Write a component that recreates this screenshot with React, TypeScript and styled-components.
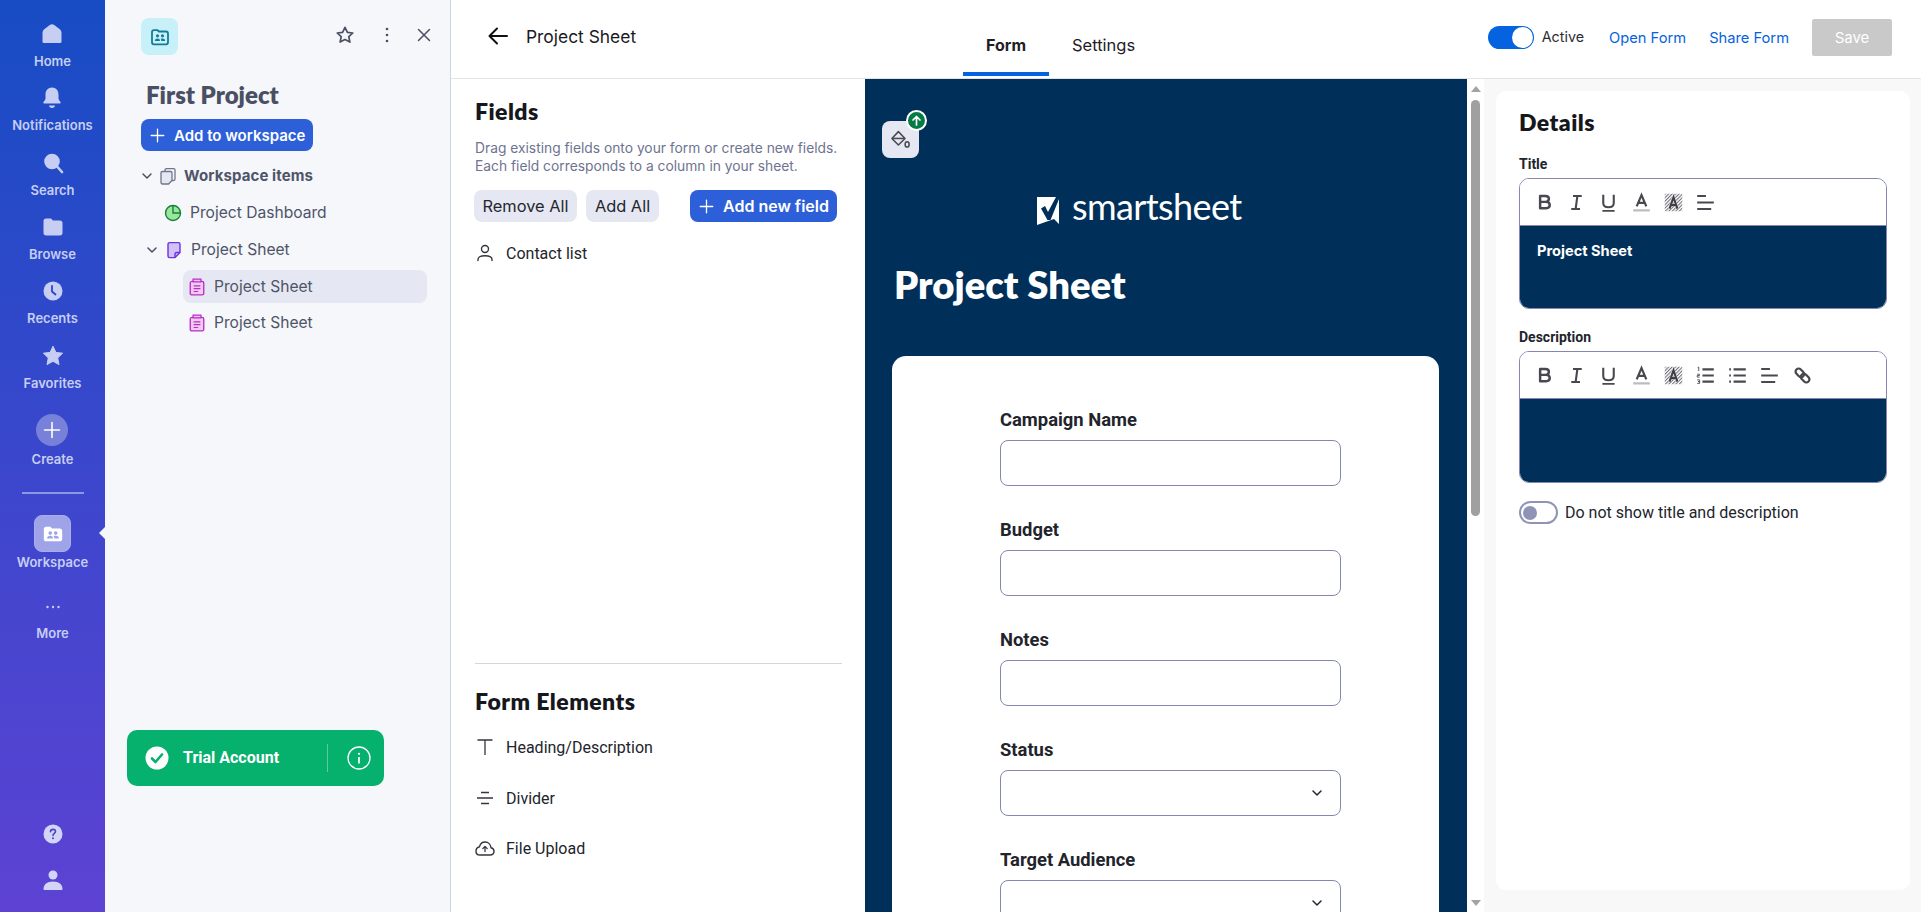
import * as React from "react";
import styled, { createGlobalStyle } from "styled-components";

const NAVY = "#003059";
const BLUE = "#2d5fd8";
const LINK = "#0563e0";
const FIELD_BORDER = "#8488b0";
const HEADING_FONT = `"Lato", "Liberation Sans", sans-serif`;
const BODY_FONT = `"Inter", "Liberation Sans", sans-serif`;
const LABEL_FONT = `"Roboto", "Liberation Sans", sans-serif`;

const GlobalStyle = createGlobalStyle`
  html, body { margin: 0; padding: 0; height: 100%; overflow: hidden; background: #fff; }
  #root { height: 100%; }
  * { box-sizing: border-box; }
`;

const Page = styled.div`
  display: flex;
  height: 912px;
  overflow: hidden;
  font-family: ${BODY_FONT};
`;

/* left rail */
const Rail = styled.nav`
  position: relative;
  flex: 0 0 105px;
  display: flex;
  flex-direction: column;
  align-items: center;
  padding-top: 22px;
  background: linear-gradient(180deg, #174cc4 0%, #5d42d4 100%);
  color: #c6cef3;
`;

const RailItem = styled.div<{ $top?: number }>`
  display: flex;
  flex-direction: column;
  align-items: center;
  margin-top: ${(p) => p.$top ?? 0}px;
`;

const RailIconBox = styled.div<{ $h?: number }>`
  display: flex;
  align-items: center;
  justify-content: center;
  height: ${(p) => p.$h ?? 24}px;
`;

const RailLabel = styled.span<{ $gap?: number }>`
  margin-top: ${(p) => p.$gap ?? 7}px;
  font-family: ${BODY_FONT};
  font-size: 13px;
  font-weight: 600;
  line-height: 16px;
  white-space: nowrap;
`;

const CreateCircle = styled.div`
  display: flex;
  align-items: center;
  justify-content: center;
  width: 32px;
  height: 32px;
  border-radius: 50%;
  background: #7781d9;
`;

const RailRule = styled.div`
  width: 62px;
  height: 2px;
  margin-top: 25px;
  background: #8d96e0;
`;

const WorkspaceTile = styled.div`
  display: flex;
  align-items: center;
  justify-content: center;
  width: 37px;
  height: 37px;
  border-radius: 8px;
  border: 1.5px solid #a9aeea;
  background: #9fa4e8;
`;

const RailNotch = styled.div`
  position: absolute;
  left: 99px;
  top: 527px;
  width: 6px;
  height: 12px;
  background: #f5f7fb;
  clip-path: polygon(100% 0, 0 50%, 100% 100%);
`;

const RailBottom = styled.div`
  margin-top: auto;
  padding-bottom: 20px;
  display: flex;
  flex-direction: column;
  align-items: center;
  gap: 22px;
`;

/* workspace panel */
const Panel = styled.aside`
  flex: 0 0 346px;
  display: flex;
  flex-direction: column;
  background: #f5f7fb;
  border-right: 1px solid #cfd5e6;
`;

const PanelTop = styled.div`
  padding: 18px 14px 0 36px;
`;

const PanelHead = styled.div`
  display: flex;
  align-items: center;
  gap: 13px;
`;

const PanelTile = styled.div`
  display: flex;
  align-items: center;
  justify-content: center;
  width: 37px;
  height: 37px;
  margin-right: auto;
  border-radius: 8px;
  background: #c8f0f8;
`;

const PanelAction = styled.button<{ $right?: number }>`
  display: flex;
  align-items: center;
  justify-content: center;
  width: 24px;
  height: 24px;
  margin-top: -3px;
  margin-right: ${(p) => p.$right ?? 0}px;
  padding: 0;
  border: 0;
  background: none;
`;

const PanelTitle = styled.h2`
  margin: 25px 0 9px 5px;
  font-family: ${HEADING_FONT};
  font-size: 24px;
  font-weight: 800;
  line-height: 30px;
  color: #4a4f63;
`;

const PrimaryButton = styled.button<{ $w: number; $size?: number }>`
  display: flex;
  align-items: center;
  gap: 9px;
  width: ${(p) => p.$w}px;
  height: 32px;
  padding: 0 0 0 9px;
  border: 0;
  border-radius: 8px;
  background: ${BLUE};
  color: #fff;
  font-family: ${BODY_FONT};
  font-size: ${(p) => p.$size ?? 15}px;
  font-weight: 600;
  white-space: nowrap;
`;

const Tree = styled.div`
  margin-top: 6px;
`;

const TreeRow = styled.div<{ $indent: number; $selected?: boolean; $bold?: boolean; $gap?: number }>`
  display: flex;
  align-items: center;
  gap: ${(p) => p.$gap ?? 8}px;
  height: ${(p) => (p.$selected ? 33 : 37)}px;
  margin: ${(p) => (p.$selected ? "2px 0 1px 42px" : "0")};
  width: ${(p) => (p.$selected ? "244px" : "auto")};
  padding-left: ${(p) => p.$indent}px;
  border-radius: 8px;
  background: ${(p) => (p.$selected ? "#e5e8f2" : "transparent")};
  color: #4f5468;
  font-family: ${BODY_FONT};
  font-size: ${(p) => (p.$bold ? 15 : 15.6)}px;
  font-weight: ${(p) => (p.$bold ? 700 : 400)};
  letter-spacing: ${(p) => (p.$bold ? 0.1 : 0)}px;
  white-space: nowrap;
`;

const TreeChevron = styled.span<{ $right: number }>`
  display: flex;
  margin-right: ${(p) => p.$right}px;
`;

const TrialBadge = styled.div`
  display: flex;
  align-items: center;
  width: 257px;
  height: 56px;
  margin: auto 0 126px 22px;
  padding: 0 13px 0 18px;
  border-radius: 10px;
  background: #06b06d;
  color: #fff;
  font-family: ${LABEL_FONT};
  font-size: 16px;
  font-weight: 700;
`;

const TrialText = styled.span`
  margin-left: 14px;
  padding-bottom: 2px;
  flex: 1;
`;

const TrialRule = styled.div`
  width: 1.5px;
  height: 28px;
  margin-right: 19px;
  background: #5ccb9f;
`;

/* main area */
const Main = styled.main`
  flex: 1;
  min-width: 0;
  display: flex;
  flex-direction: column;
`;

const Header = styled.header`
  flex: 0 0 79px;
  display: flex;
  align-items: center;
  border-bottom: 1px solid #e4e4e4;
  background: #fff;
`;

const HeaderLeft = styled.div`
  flex: 0 0 512px;
  display: flex;
  align-items: center;
  gap: 16px;
  padding-left: 35px;
  margin-top: -6px;
  font-size: 17.4px;
  color: #1a1a1f;
`;

const Tabs = styled.div`
  align-self: flex-end;
  display: flex;
  margin-bottom: 2px;
`;

const Tab = styled.div<{ $active?: boolean }>`
  display: flex;
  align-items: center;
  height: 50px;
  padding: 0 23px 8px;
  border-bottom: 4px solid ${(p) => (p.$active ? LINK : "transparent")};
  font-family: ${BODY_FONT};
  font-size: ${(p) => (p.$active ? 16 : 16.5)}px;
  font-weight: ${(p) => (p.$active ? 700 : 400)};
  color: #1f2026;
`;

const HeaderRight = styled.div`
  margin-left: auto;
  padding: 0 29px 3px 0;
  display: flex;
  align-items: center;
  font-size: 14.7px;
`;

const Switch = styled.div<{ $on?: boolean }>`
  display: flex;
  align-items: center;
  justify-content: ${(p) => (p.$on ? "flex-end" : "flex-start")};
  width: ${(p) => (p.$on ? 46 : 39)}px;
  height: 23px;
  padding: ${(p) => (p.$on ? "0 1px" : "0 2px")};
  border-radius: 12px;
  border: ${(p) => (p.$on ? 0 : `2.5px solid #8f94b7`)};
  background: ${(p) => (p.$on ? LINK : "#fff")};
`;

const SwitchThumb = styled.div<{ $on?: boolean }>`
  width: ${(p) => (p.$on ? 21 : 14)}px;
  height: ${(p) => (p.$on ? 21 : 14)}px;
  border-radius: 50%;
  background: ${(p) => (p.$on ? "#fff" : "#8f94b7")};
`;

const ActiveText = styled.span`
  margin: -2px 25px 0 8px;
  font-size: 14.3px;
  color: #2b2d33;
`;

const HeaderLink = styled.a`
  margin-right: 23px;
  color: ${LINK};
  white-space: nowrap;
`;

const SaveButton = styled.button`
  width: 80px;
  height: 37px;
  border: 0;
  border-radius: 2px;
  background: #c9c9c9;
  color: #fff;
  font-family: ${BODY_FONT};
  font-size: 15px;
`;

const Body = styled.div`
  flex: 1;
  min-height: 0;
  display: flex;
`;

/* fields column */
const FieldsColumn = styled.section`
  flex: 0 0 414px;
  display: flex;
  flex-direction: column;
  padding: 18px 23px 0 24px;
  background: #fff;
`;

const SectionTitle = styled.h3`
  margin: 0;
  font-family: ${HEADING_FONT};
  font-size: 23px;
  font-weight: 800;
  line-height: 28px;
  letter-spacing: 0.45px;
  color: #16171c;
`;

const Help = styled.p`
  margin: 14px 0 15px;
  font-size: 13.8px;
  line-height: 18px;
  color: #6e7390;
  white-space: nowrap;
`;

const ButtonRow = styled.div`
  display: flex;
  align-items: center;
  margin-left: -1px;
  margin-bottom: 16px;
`;

const SoftButton = styled.button<{ $w: number }>`
  width: ${(p) => p.$w}px;
  height: 32px;
  margin-right: 9px;
  padding: 0;
  border: 0;
  border-radius: 8px;
  background: #e5e8f2;
  color: #24262e;
  font-family: ${BODY_FONT};
  font-size: 16.4px;
`;

const AddField = styled(PrimaryButton)`
  margin-left: auto;
  margin-right: 5px;
`;

const ElementItem = styled.div<{ $gap?: number }>`
  display: flex;
  align-items: center;
  gap: 10px;
  height: 30px;
  margin-bottom: ${(p) => p.$gap ?? 0}px;
  margin-left: -1px;
  font-family: ${LABEL_FONT};
  font-size: 16px;
  color: #22242c;
`;

const ElementIcon = styled.span`
  display: flex;
  align-items: center;
  justify-content: center;
  width: 22px;
`;

const ElementsBlock = styled.div`
  margin-top: auto;
  flex: 0 0 249px;
  border-top: 1px solid #d4d6df;
  padding-top: 23px;
`;

const ElementsList = styled.div`
  margin-top: 17px;
`;

/* form preview */
const FormColumn = styled.section`
  position: relative;
  flex: 0 0 602px;
  overflow: hidden;
  background: ${NAVY};
  padding-top: 114px;
`;

const ThemeButton = styled.div`
  position: absolute;
  left: 17px;
  top: 42px;
  display: flex;
  align-items: center;
  justify-content: center;
  width: 37px;
  height: 37px;
  border-radius: 8px;
  background: #e5e8f2;
`;

const ThemeBadge = styled.div`
  position: absolute;
  right: -8px;
  top: -11px;
  display: flex;
  align-items: center;
  justify-content: center;
  width: 21px;
  height: 21px;
  border-radius: 50%;
  background: #057a45;
  border: 2px solid #fff;
`;

const Logo = styled.div`
  display: flex;
  align-items: center;
  gap: 13px;
  height: 36px;
  margin-left: 172px;
`;

const LogoWord = styled.span`
  margin-top: -11px;
  font-family: "Lato", "Open Sans", sans-serif;
  font-size: 36px;
  font-weight: 400;
  line-height: 36px;
  letter-spacing: -0.6px;
  color: #fff;
`;

const FormTitle = styled.h1`
  margin: 33px 0 50px 29px;
  font-family: ${HEADING_FONT};
  font-size: 38.2px;
  font-weight: 800;
  line-height: 44px;
  color: #fff;
`;

const FormCard = styled.div`
  width: 547px;
  margin-left: 27px;
  padding: 52px 98px 40px 108px;
  border-radius: 14px 14px 0 0;
  background: #fff;
`;

const FormField = styled.div`
  margin-bottom: 32px;
`;

const FieldLabel = styled.label`
  display: block;
  margin-bottom: 8px;
  font-family: ${LABEL_FONT};
  font-size: 18.4px;
  font-weight: 700;
  line-height: 24px;
  color: #22242c;
`;

const FieldBox = styled.div`
  display: flex;
  align-items: center;
  justify-content: flex-end;
  height: 46px;
  padding-right: 17px;
  border: 1px solid ${FIELD_BORDER};
  border-radius: 8px;
  background: #fff;
`;

/* fake browser scrollbar */
const ScrollTrack = styled.div`
  flex: 0 0 17px;
  display: flex;
  flex-direction: column;
  align-items: center;
  padding: 7px 0 6px;
  background: #fff;
`;

const ScrollArrow = styled.div<{ $down?: boolean }>`
  width: 0;
  height: 0;
  border-left: 5.5px solid transparent;
  border-right: 5.5px solid transparent;
  ${(p) => (p.$down ? "border-top: 6px solid #a3a3a3;" : "border-bottom: 6px solid #a3a3a3;")}
  ${(p) => (p.$down ? "margin-top: auto;" : "")}
`;

const ScrollThumb = styled.div`
  width: 9px;
  height: 416px;
  margin-top: 8px;
  border-radius: 5px;
  background: #a0a0a0;
`;

/* details */
const DetailsGutter = styled.section`
  flex: 1;
  min-width: 0;
  padding: 12px 11px 22px 12px;
  background: #f8f8f8;
`;

const DetailsCard = styled.div`
  height: 100%;
  padding: 17px 23px 0;
  border-radius: 10px;
  background: #fff;
`;

const DetailLabel = styled.label`
  display: block;
  margin: 20px 0 6px;
  font-family: ${LABEL_FONT};
  font-size: 14px;
  font-weight: 700;
  line-height: 16px;
  color: #22242c;
`;

const Editor = styled.div<{ $h: number }>`
  display: flex;
  flex-direction: column;
  height: ${(p) => p.$h}px;
  overflow: hidden;
  border: 1px solid ${FIELD_BORDER};
  border-radius: 10px;
`;

const EditorBar = styled.div`
  flex: 0 0 47px;
  display: flex;
  align-items: center;
  gap: 11.2px;
  padding-left: 14px;
  background: #fff;
  border-bottom: 1px solid ${FIELD_BORDER};
`;

const EditorBody = styled.div`
  flex: 1;
  padding: 17px 17px;
  background: ${NAVY};
  color: #fff;
  font-size: 14.6px;
  font-weight: 700;
  line-height: 17px;
`;

const HideRow = styled.div`
  display: flex;
  align-items: center;
  gap: 7px;
  margin-top: 18px;
  font-family: ${LABEL_FONT};
  font-size: 16px;
  color: #22242c;
`;

/* icons */
const railIcon = "#c6cef3";

const Svg = ({ s = 24, box = 24, children }: { s?: number; box?: number; children: React.ReactNode }) => (
  <svg width={s} height={s} viewBox={`0 0 ${box} ${box}`} fill="none">
    {children}
  </svg>
);

const HomeIcon = () => (
  <Svg>
    <path d="M2.5 11c0-1.7.8-2.9 2-4l5-3.8c1.6-1.2 3.4-1.2 5 0l5 3.8c1.2 1.1 2 2.3 2 4v8.5c0 1-.7 1.5-1.5 1.5H4c-.8 0-1.5-.5-1.5-1.5V11z" fill={railIcon} />
  </Svg>
);
const BellIcon = () => (
  <Svg>
    <path d="M12 1.5c4 0 6.5 3 6.5 7v4c0 1.5 1.5 2.6 2 3.4.5.8 0 1.6-1 1.6h-15c-1 0-1.5-.8-1-1.6.5-.8 2-1.9 2-3.4v-4c0-4 2.5-7 6.5-7z" fill={railIcon} />
    <path d="M9 19.5h6c0 1.4-1.3 2.5-3 2.5s-3-1.1-3-2.5z" fill={railIcon} />
  </Svg>
);
const SearchIcon = () => (
  <Svg>
    <circle cx="11" cy="10.5" r="7.8" fill={railIcon} />
    <path d="M16.5 16l4.5 5" stroke={railIcon} strokeWidth="2.6" strokeLinecap="round" />
  </Svg>
);
const FolderIcon = () => (
  <Svg>
    <path d="M2.5 6c0-1.5 1-2.5 2.5-2.5h4c1 0 1.7.5 2.3 1.2l.7.8h7c1.5 0 2.5 1 2.5 2.5v10c0 1.5-1 2.5-2.5 2.5H5c-1.500 0-2.500-1-2.500-2.500V6z" fill={railIcon} />
  </Svg>
);
const ClockIcon = () => (
  <Svg>
    <circle cx="12" cy="12" r="9.5" fill={railIcon} />
    <path d="M11 7v5.5l3.5 3" stroke="#2c45c6" strokeWidth="1.8" strokeLinecap="round" />
  </Svg>
);
const StarFilled = () => (
  <Svg>
    <path d="M12 2.2l2.9 6.2 6.7.8-4.9 4.7 1.3 6.7L12 17.3l-6 3.3 1.3-6.7L2.4 9.2l6.7-.8L12 2.2z" fill={railIcon} stroke={railIcon} strokeLinejoin="round" />
  </Svg>
);
const Plus = ({ s = 18, c = "#fff", w = 1.6 }: { s?: number; c?: string; w?: number }) => (
  <Svg s={s} box={18}>
    <path d="M9 1.5v15M1.5 9h15" stroke={c} strokeWidth={w} strokeLinecap="round" />
  </Svg>
);
const WorkspaceGlyph = ({ s, bg, fg }: { s: number; bg: string; fg: string }) => (
  <Svg s={s}>
    <path d="M2 6.5C2 5 3 4 4.5 4H9l2 2h8.5C21 6 22 7 22 8.5v9c0 1.5-1 2.5-2.5 2.5h-15C3 20 2 19 2 17.5v-11z" fill={bg} />
    <circle cx="9" cy="11" r="2" fill={fg} />
    <circle cx="15" cy="11" r="2" fill={fg} />
    <path d="M5.500 17c0-2 1.500-3 3.500-3s3 1 3 3h-6.500zM12.500 14.300c.7-.2 1.500-.3 2.500-.3 2 0 3.500 1 3.500 3h-5c0-1-.3-2-1-2.700z" fill={fg} />
  </Svg>
);
const TileGlyph = () => (
  <Svg s={20} box={20}>
    <path d="M2 5.200C2 4 2.800 3.200 4 3.200h3.500l1.500 1.300h7c1.200 0 2 .8 2 2v8.800c0 1.200-.8 2-2 2H4c-1.200 0-2-.8-2-2V5.200z" stroke="#127c98" strokeWidth="1.8" />
    <circle cx="7.5" cy="8.8" r="1.6" fill="#127c98" />
    <circle cx="12.5" cy="8.8" r="1.6" fill="#127c98" />
    <path d="M4.800 14c0-1.700 1.200-2.500 2.700-2.500s2.500.8 2.500 2.500H4.800zM10.800 11.700c.5-.2 1-.2 1.700-.2 1.500 0 2.700.8 2.700 2.500h-4c0-1-.1-1.700-.4-2.300z" fill="#127c98" />
  </Svg>
);
const HelpIcon = () => (
  <Svg>
    <circle cx="12" cy="12" r="9.5" fill="#d2d5f6" />
    <path d="M9.500 9.700c0-1.400 1.100-2.300 2.500-2.300s2.500.9 2.500 2.200c0 1.800-2.500 1.900-2.500 3.900" stroke="#4f41cb" strokeWidth="1.6" strokeLinecap="round" />
    <circle cx="12" cy="16.3" r="1" fill="#4f41cb" />
  </Svg>
);
const UserIcon = () => (
  <Svg>
    <circle cx="12" cy="7" r="4.5" fill="#d2d5f6" />
    <path d="M2.500 21c0-4.500 3.500-7.500 9.500-7.500s9.500 3 9.500 7.500c0 .7-.5 1-1 1H3.500c-.5 0-1-.3-1-1z" fill="#d2d5f6" />
  </Svg>
);
const Chevron = ({ c = "#4a4f63", s = 12 }: { c?: string; s?: number }) => (
  <Svg s={s} box={12}>
    <path d="M2 4l4 4 4-4" stroke={c} strokeWidth="1.5" strokeLinecap="round" strokeLinejoin="round" />
  </Svg>
);
const DocsIcon = () => (
  <Svg s={18} box={18}>
    <path d="M6 4.500V3c0-.8.6-1.400 1.400-1.400h7.200c.8 0 1.400.6 1.400 1.400v9c0 .8-.6 1.500-1.400 1.500H13" stroke="#70758a" strokeWidth="1.3" />
    <path d="M2 5.800c0-.8.6-1.300 1.400-1.300h8.200c.8 0 1.400.5 1.400 1.300v7.700L9.500 17H3.400C2.600 17 2 16.400 2 15.600V5.800z" fill="#e5e8f2" stroke="#70758a" strokeWidth="1.3" />
  </Svg>
);
const DashboardIcon = () => (
  <Svg s={18} box={18}>
    <circle cx="9" cy="9" r="7.5" fill="#9ae69b" stroke="#16803c" strokeWidth="1.4" />
    <path d="M9 1.500V9h7.500" stroke="#16803c" strokeWidth="1.4" />
  </Svg>
);
const SheetIcon = () => (
  <Svg s={18} box={18}>
    <path d="M3 3.200C3 2.300 3.700 1.600 4.600 1.600h9c.8 0 1.400.7 1.400 1.600v8.300L10 16.600H4.600c-.9 0-1.600-.7-1.600-1.600V3.200z" fill="#d3c0f9" stroke="#6b34dc" strokeWidth="1.4" />
    <path d="M15 11.500h-3.300c-.9 0-1.700.8-1.700 1.700v3.400" stroke="#6b34dc" strokeWidth="1.4" />
  </Svg>
);
const FormIcon = () => (
  <Svg s={18} box={16}>
    <path d="M3.500 3h9c.8 0 1.500.7 1.500 1.500v9.200c0 .8-.7 1.300-1.500 1.300h-9C2.700 15 2 14.500 2 13.700V4.500C2 3.700 2.700 3 3.500 3z" fill="#f1c9f1" stroke="#b92fc6" strokeWidth="1.2" />
    <path d="M4.500 1h7v2.500h-7z" fill="#f1c9f1" stroke="#b92fc6" strokeWidth="1.1" />
    <path d="M5 7h6M5 9.500h6M5 12h4" stroke="#b92fc6" strokeWidth="1.1" />
  </Svg>
);
const StarOutline = () => (
  <Svg s={20} box={20}>
    <path d="M10 2.300l2.400 5 5.400.7-4 3.700 1.100 5.400-4.900-2.700-4.900 2.700 1.100-5.400-4-3.700 5.400-.7L10 2.300z" stroke="#4a4f63" strokeWidth="1.7" strokeLinejoin="round" />
  </Svg>
);
const DotsIcon = () => (
  <Svg s={20} box={20}>
    <circle cx="10" cy="4" r="1.3" fill="#4a4f63" />
    <circle cx="10" cy="10" r="1.3" fill="#4a4f63" />
    <circle cx="10" cy="16" r="1.3" fill="#4a4f63" />
  </Svg>
);
const CloseIcon = () => (
  <Svg s={14} box={14}>
    <path d="M1.500 1.500l11 11M12.500 1.500l-11 11" stroke="#4a4f63" strokeWidth="1.5" strokeLinecap="round" />
  </Svg>
);
const CheckCircle = () => (
  <Svg s={24} box={24}>
    <circle cx="12" cy="12" r="11.5" fill="#fff" />
    <path d="M7 12.500l3.500 3.500L17 8.500" stroke="#06b06d" strokeWidth="2.6" strokeLinecap="round" strokeLinejoin="round" />
  </Svg>
);
const InfoCircle = () => (
  <Svg s={24} box={24}>
    <circle cx="12" cy="12" r="11" stroke="#fff" strokeWidth="1.3" />
    <circle cx="12" cy="7.8" r="1.1" fill="#fff" />
    <path d="M12 11v6.500" stroke="#fff" strokeWidth="1.7" />
  </Svg>
);
const BackArrow = () => (
  <Svg>
    <path d="M21 12H4M11 4.500L3.500 12l7.500 7.500" stroke="#111" strokeWidth="2" strokeLinecap="round" strokeLinejoin="round" />
  </Svg>
);
const PersonIcon = () => (
  <Svg s={18} box={18}>
    <circle cx="9" cy="5" r="3.5" stroke="#33363f" strokeWidth="1.4" />
    <path d="M2 16.500v-1c0-2.300 2-3.800 7-3.800s7 1.500 7 3.800v1" stroke="#33363f" strokeWidth="1.4" strokeLinecap="round" />
  </Svg>
);
const HeadingIcon = () => (
  <Svg s={18} box={18}>
    <path d="M1.500 2h15M9 2v15" stroke="#33363f" strokeWidth="1.3" />
  </Svg>
);
const DividerIcon = () => (
  <Svg s={18} box={18}>
    <path d="M5 3.500h8M1 9h16M5 14.500h8" stroke="#33363f" strokeWidth="1.4" />
  </Svg>
);
const UploadIcon = () => (
  <Svg s={20} box={20}>
    <path d="M5 17h10c2.300 0 4-1.500 4-3.700 0-1.900-1.300-3.300-3-3.600C15.600 6.600 13.300 4 10.200 4 7.500 4 5.200 5.900 4.500 8.700 2.500 9.200 1 11 1 13.200 1 15.500 2.800 17 5 17z" stroke="#33363f" strokeWidth="1.4" />
    <path d="M10 13.500V8.500M7.800 10.600L10 8.400l2.200 2.200" stroke="#33363f" strokeWidth="1.3" strokeLinecap="round" strokeLinejoin="round" />
  </Svg>
);
const PaintIcon = () => (
  <Svg s={21} box={20}>
    <path d="M8 2.500L1.800 9l6.200 6.200L14.300 9 8 2.500z" stroke="#4b4b52" strokeWidth="1.5" strokeLinejoin="round" />
    <path d="M2.500 9h11" stroke="#4b4b52" strokeWidth="1.5" />
    <ellipse cx="16.3" cy="14.7" rx="1.9" ry="2.5" stroke="#4b4b52" strokeWidth="1.5" />
  </Svg>
);
const ArrowUp = () => (
  <Svg s={11} box={11}>
    <path d="M5.500 10V1.500M2 5l3.500-3.500L9 5" stroke="#fff" strokeWidth="1.7" strokeLinecap="round" strokeLinejoin="round" />
  </Svg>
);
const SmartsheetMark = () => (
  <svg width="22" height="28" viewBox="0 0 22 28">
    <path d="M0 0h22v27l-5-5L0 28z" fill="#fff" />
    <path d="M4 11.500L8 9l3 6L19 0h3v2L13.500 23H10.500z" fill={NAVY} />
  </svg>
);

const I = "#48484f";
const Tool = ({ children }: { children: React.ReactNode }) => (
  <Svg s={21} box={24}>
    {children}
  </Svg>
);
const BoldTool = () => (
  <Tool>
    <path d="M7 4.500h6c2.500 0 4 1.300 4 3.300 0 2-1.500 3.500-4 3.500H7V4.500zM7 11.300h6.800c2.500 0 4.200 1.400 4.200 3.600s-1.700 3.600-4.200 3.600H7V11.300z" stroke={I} strokeWidth="2.8" strokeLinejoin="round" />
  </Tool>
);
const ItalicTool = () => (
  <Tool>
    <path d="M8 4.500h10M6 19.500h10M13 4.500l-2 15" stroke={I} strokeWidth="2.4" />
  </Tool>
);
const UnderlineTool = () => (
  <Tool>
    <path d="M6 3v9.500c0 3.300 2.500 5 6 5s6-1.700 6-5V3" stroke={I} strokeWidth="2.4" />
    <path d="M5 21.500h14" stroke={I} strokeWidth="2" />
  </Tool>
);
const ColorTool = () => (
  <Tool>
    <path d="M6.500 16.500L12 3.500l5.500 13M8.300 12.500h7.400" stroke={I} strokeWidth="2.5" />
    <path d="M2.500 21h19" stroke="#bdbdbd" strokeWidth="2.4" />
  </Tool>
);
const HighlightTool = ({ id }: { id: string }) => (
  <Tool>
    <defs>
      <pattern id={id} width="2.8" height="2.8" patternUnits="userSpaceOnUse" patternTransform="rotate(45)">
        <rect width="1.2" height="2.8" fill="#6f6f74" />
      </pattern>
    </defs>
    <rect x="2" y="2" width="20" height="20" fill={`url(#${id})`} />
    <path d="M7.500 19L12 6l4.500 13M8.800 15h6.400" stroke="#fff" strokeWidth="3.4" />
    <path d="M7.500 19L12 6l4.500 13M8.800 15h6.400" stroke="#3f3f45" strokeWidth="2.5" />
  </Tool>
);
const ListNumberTool = () => (
  <Tool>
    <path d="M8.500 5h13M8.500 12h13M8.500 19h13" stroke={I} strokeWidth="2.4" />
    <path d="M3 3l1.300-.7V7M2.500 10.500h2.600v1.500H2.500v1.800h2.800M2.500 17h2.800v2H3.500h1.800v2H2.500" stroke={I} strokeWidth="1" />
  </Tool>
);
const ListBulletTool = () => (
  <Tool>
    <path d="M7.500 5h14M7.500 12h14M7.500 19h14" stroke={I} strokeWidth="2.4" />
    <path d="M2.500 5h2M2.500 12h2M2.500 19h2" stroke={I} strokeWidth="2.4" />
  </Tool>
);
const AlignTool = () => (
  <Tool>
    <path d="M2.500 4.500h10M2.500 12h19M2.500 19.500h16" stroke={I} strokeWidth="2.4" />
  </Tool>
);
const LinkTool = () => (
  <Tool>
    <g stroke={I} strokeWidth="2.6">
      <rect x="3.5" y="5.5" width="11" height="7" rx="3.5" transform="rotate(45 9 9)" />
      <rect x="9.5" y="11.5" width="11" height="7" rx="3.5" transform="rotate(45 15 15)" />
    </g>
  </Tool>
);

const fields: { label: string; select?: boolean }[] = [
  { label: "Campaign Name" },
  { label: "Budget" },
  { label: "Notes" },
  { label: "Status", select: true },
  { label: "Target Audience", select: true },
];

export default function App() {
  return (
    <Page>
      <GlobalStyle />
      <Rail>
        <RailItem>
          <RailIconBox><HomeIcon /></RailIconBox>
          <RailLabel>Home</RailLabel>
        </RailItem>
        <RailItem $top={17}>
          <RailIconBox><BellIcon /></RailIconBox>
          <RailLabel>Notifications</RailLabel>
        </RailItem>
        <RailItem $top={18}>
          <RailIconBox><SearchIcon /></RailIconBox>
          <RailLabel>Search</RailLabel>
        </RailItem>
        <RailItem $top={17}>
          <RailIconBox><FolderIcon /></RailIconBox>
          <RailLabel>Browse</RailLabel>
        </RailItem>
        <RailItem $top={17}>
          <RailIconBox><ClockIcon /></RailIconBox>
          <RailLabel>Recents</RailLabel>
        </RailItem>
        <RailItem $top={18}>
          <RailIconBox><StarFilled /></RailIconBox>
          <RailLabel>Favorites</RailLabel>
        </RailItem>
        <RailItem $top={23}>
          <RailIconBox $h={32}>
            <CreateCircle><Plus s={18} /></CreateCircle>
          </RailIconBox>
          <RailLabel $gap={5}>Create</RailLabel>
        </RailItem>
        <RailRule />
        <RailItem $top={21}>
          <RailIconBox $h={37}>
            <WorkspaceTile>
              <WorkspaceGlyph s={22} bg="#fff" fg="#9fa4e8" />
            </WorkspaceTile>
          </RailIconBox>
          <RailLabel $gap={2}>Workspace</RailLabel>
        </RailItem>
        <RailItem $top={28}>
          <RailIconBox $h={18}>
            <Svg s={16} box={16}>
              <circle cx="2.5" cy="8" r="1.2" fill={railIcon} />
              <circle cx="8" cy="8" r="1.2" fill={railIcon} />
              <circle cx="13.5" cy="8" r="1.2" fill={railIcon} />
            </Svg>
          </RailIconBox>
          <RailLabel $gap={9}>More</RailLabel>
        </RailItem>
        <RailBottom>
          <HelpIcon />
          <UserIcon />
        </RailBottom>
        <RailNotch />
      </Rail>

      <Panel>
        <PanelTop>
          <PanelHead>
            <PanelTile>
              <TileGlyph />
            </PanelTile>
            <PanelAction $right={5}><StarOutline /></PanelAction>
            <PanelAction><DotsIcon /></PanelAction>
            <PanelAction><CloseIcon /></PanelAction>
          </PanelHead>
          <PanelTitle>First Project</PanelTitle>
          <PrimaryButton $w={172}>
            <Plus s={15} />
            Add to workspace
          </PrimaryButton>
          <Tree>
            <TreeRow $indent={0} $bold $gap={7}>
              <TreeChevron $right={-1}><Chevron /></TreeChevron>
              <DocsIcon />
              Workspace items
            </TreeRow>
            <TreeRow $indent={23}>
              <DashboardIcon />
              Project Dashboard
            </TreeRow>
            <TreeRow $indent={5}>
              <TreeChevron $right={-1}><Chevron /></TreeChevron>
              <SheetIcon />
              Project Sheet
            </TreeRow>
            <TreeRow $indent={5} $selected>
              <FormIcon />
              Project Sheet
            </TreeRow>
            <TreeRow $indent={47}>
              <FormIcon />
              Project Sheet
            </TreeRow>
          </Tree>
        </PanelTop>
        <TrialBadge>
          <CheckCircle />
          <TrialText>Trial Account</TrialText>
          <TrialRule />
          <InfoCircle />
        </TrialBadge>
      </Panel>

      <Main>
        <Header>
          <HeaderLeft>
            <BackArrow />
            Project Sheet
          </HeaderLeft>
          <Tabs>
            <Tab $active>Form</Tab>
            <Tab>Settings</Tab>
          </Tabs>
          <HeaderRight>
            <Switch $on><SwitchThumb $on /></Switch>
            <ActiveText>Active</ActiveText>
            <HeaderLink>Open Form</HeaderLink>
            <HeaderLink>Share Form</HeaderLink>
            <SaveButton>Save</SaveButton>
          </HeaderRight>
        </Header>
        <Body>
          <FieldsColumn>
            <SectionTitle>Fields</SectionTitle>
            <Help>
              Drag existing fields onto your form or create new fields.
              <br />
              Each field corresponds to a column in your sheet.
            </Help>
            <ButtonRow>
              <SoftButton $w={103}>Remove All</SoftButton>
              <SoftButton $w={73}>Add All</SoftButton>
              <AddField $w={147} $size={16}>
                <Plus s={15} />
                Add new field
              </AddField>
            </ButtonRow>
            <ElementItem>
              <ElementIcon><PersonIcon /></ElementIcon>
              Contact list
            </ElementItem>
            <ElementsBlock>
              <SectionTitle>Form Elements</SectionTitle>
              <ElementsList>
                <ElementItem $gap={21}>
                  <ElementIcon><HeadingIcon /></ElementIcon>
                  Heading/Description
                </ElementItem>
                <ElementItem $gap={20}>
                  <ElementIcon><DividerIcon /></ElementIcon>
                  Divider
                </ElementItem>
                <ElementItem>
                  <ElementIcon><UploadIcon /></ElementIcon>
                  File Upload
                </ElementItem>
              </ElementsList>
            </ElementsBlock>
          </FieldsColumn>

          <FormColumn>
            <ThemeButton>
              <PaintIcon />
              <ThemeBadge><ArrowUp /></ThemeBadge>
            </ThemeButton>
            <Logo>
              <SmartsheetMark />
              <LogoWord>smartsheet</LogoWord>
            </Logo>
            <FormTitle>Project Sheet</FormTitle>
            <FormCard>
              {fields.map((f) => (
                <FormField key={f.label}>
                  <FieldLabel>{f.label}</FieldLabel>
                  <FieldBox>{f.select && <Chevron c="#23252e" />}</FieldBox>
                </FormField>
              ))}
            </FormCard>
          </FormColumn>

          <ScrollTrack>
            <ScrollArrow />
            <ScrollThumb />
            <ScrollArrow $down />
          </ScrollTrack>

          <DetailsGutter>
            <DetailsCard>
              <SectionTitle>Details</SectionTitle>
              <DetailLabel>Title</DetailLabel>
              <Editor $h={131}>
                <EditorBar>
                  <BoldTool />
                  <ItalicTool />
                  <UnderlineTool />
                  <ColorTool />
                  <HighlightTool id="hatch-a" />
                  <AlignTool />
                </EditorBar>
                <EditorBody>Project Sheet</EditorBody>
              </Editor>
              <DetailLabel>Description</DetailLabel>
              <Editor $h={132}>
                <EditorBar>
                  <BoldTool />
                  <ItalicTool />
                  <UnderlineTool />
                  <ColorTool />
                  <HighlightTool id="hatch-b" />
                  <ListNumberTool />
                  <ListBulletTool />
                  <AlignTool />
                  <LinkTool />
                </EditorBar>
                <EditorBody />
              </Editor>
              <HideRow>
                <Switch><SwitchThumb /></Switch>
                Do not show title and description
              </HideRow>
            </DetailsCard>
          </DetailsGutter>
        </Body>
      </Main>
    </Page>
  );
}
